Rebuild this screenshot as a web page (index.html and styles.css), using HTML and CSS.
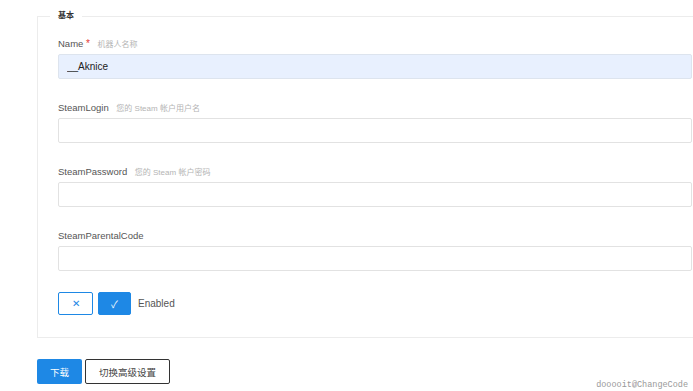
FILE: index.html
```html
<!DOCTYPE html>
<html lang="zh-CN">

<head>
    <meta charset="UTF-8">
    <meta name="viewport" content="width=device-width, initial-scale=1.0">
    <title>Bot Config</title>
    <link rel="stylesheet" href="styles.css">
</head>

<body>

    <div class="page">
        <form class="bot-form">
            <fieldset class="group">
                <legend>基本</legend>

                <div class="field">
                    <label for="name">Name <span class="req">*</span> <span class="hint">机器人名称</span></label>
                    <input type="text" id="name" class="autofill" value="__Aknice">
                </div>

                <div class="field">
                    <label for="login">SteamLogin <span class="hint">您的 Steam 帐户用户名</span></label>
                    <input type="text" id="login">
                </div>

                <div class="field">
                    <label for="password">SteamPassword <span class="hint">您的 Steam 帐户密码</span></label>
                    <input type="text" id="password">
                </div>

                <div class="field">
                    <label for="parental">SteamParentalCode</label>
                    <input type="text" id="parental">
                </div>

                <div class="toggle">
                    <button type="button" class="tg-off">&#x2715;</button>
                    <button type="button" class="tg-on">&#x2713;</button>
                    <span class="tg-label">Enabled</span>
                </div>
            </fieldset>

            <div class="actions">
                <button type="button" class="btn-primary">下载</button>
                <button type="button" class="btn-outline">切换高级设置</button>
            </div>
        </form>

        <div class="watermark">dooooit@ChangeCode</div>
    </div>

</body>

</html>
```

FILE: styles.css
```css
body {
    font-family: 'Liberation Sans', Arial, 'Noto Sans CJK SC', sans-serif;
    background-color: #ffffff;
    margin: 0;
    padding: 0;
    overflow: hidden;
    height: 391px;
}

.page {
    position: relative;
    box-sizing: border-box;
    height: 391px;
    padding: 10px 0 0 37px;
}

.bot-form {
    width: 700px;
}

.group {
    margin: 0;
    border: 1px solid #ececec;
    padding: 15px 0 22px 20px;
}

.group legend {
    margin-left: -8px;
    padding: 0 8px;
    font-size: 8px;
    font-weight: bold;
    color: #333333;
    line-height: 12px;
}

.field {
    margin-bottom: 22px;
    width: 634px;
}

.field label {
    display: block;
    height: 13px;
    font-size: 9.5px;
    color: #555555;
    line-height: 13px;
    margin-bottom: 4px;
    white-space: nowrap;
}

.req {
    color: #e53935;
    font-size: 10px;
}

.hint {
    font-size: 8px;
    color: #b4b4b4;
    margin-left: 5px;
}

.field input {
    display: block;
    box-sizing: border-box;
    width: 100%;
    height: 25px;
    padding: 0 8px;
    border: 1px solid #e2e2e2;
    border-radius: 2px;
    font-family: inherit;
    font-size: 10px;
    color: #222222;
    background-color: #ffffff;
    outline: none;
}

.field input.autofill {
    background-color: #e8f0fe;
    border-color: #dde4ee;
}

.toggle {
    display: flex;
    align-items: center;
    height: 24px;
    margin-top: -2px;
}

.toggle button {
    height: 23px;
    border-radius: 2px;
    font-size: 10px;
    padding: 0;
    cursor: pointer;
}

.tg-off {
    width: 35px;
    background-color: #ffffff;
    border: 1.5px solid #1e88e5;
    color: #1e88e5;
}

.tg-on {
    width: 33px;
    margin-left: 5px;
    background-color: #1e88e5;
    border: 1px solid #1e88e5;
    color: #ffffff;
}

.tg-label {
    margin-left: 7px;
    font-size: 10px;
    color: #555555;
}

.actions {
    display: flex;
    gap: 3px;
    margin-top: 21px;
}

.actions button {
    height: 25px;
    border-radius: 2px;
    font-family: inherit;
    font-size: 9.5px;
    cursor: pointer;
}

.btn-primary {
    width: 45px;
    background-color: #1e88e5;
    border: none;
    color: #ffffff;
}

.btn-outline {
    width: 85px;
    background-color: #ffffff;
    border: 1.5px solid #333333;
    color: #444444;
}

.watermark {
    position: absolute;
    right: 5px;
    bottom: 1px;
    line-height: 10px;
    font-family: 'Liberation Mono', monospace;
    font-size: 8.5px;
    color: #999999;
}
```
